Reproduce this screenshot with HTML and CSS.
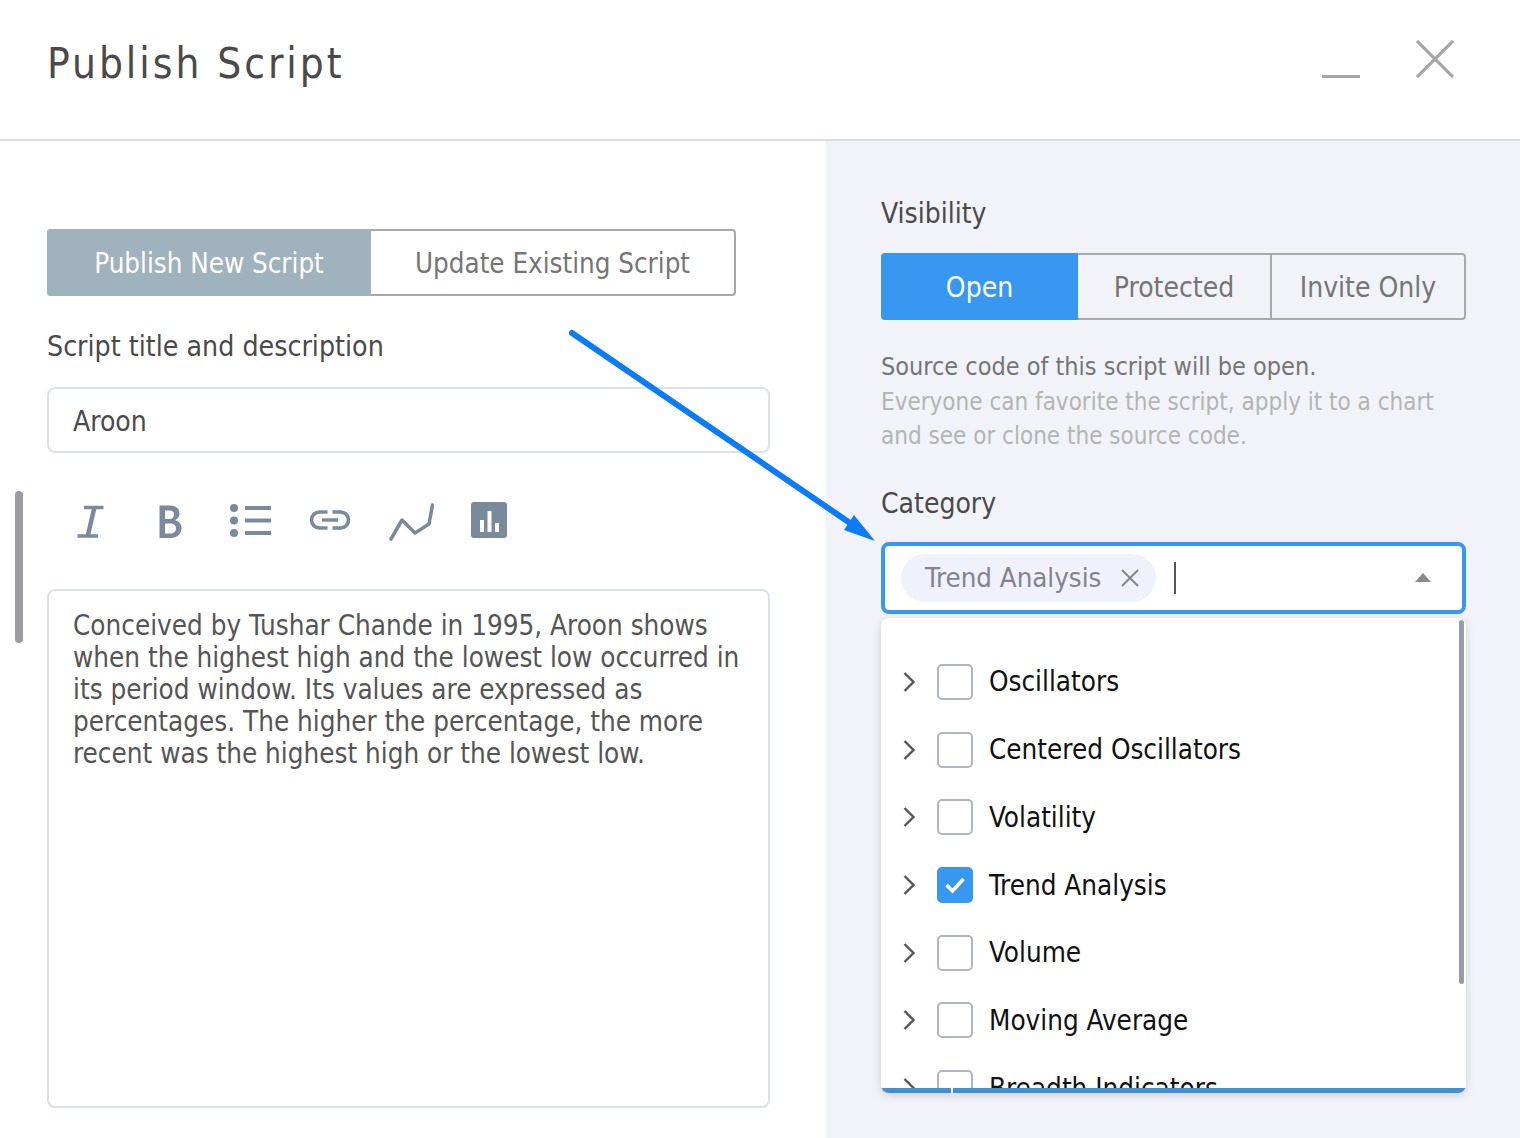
FILE: index.html
```html
<!DOCTYPE html>
<html lang="en">
<head>
    <meta charset="UTF-8">
    <title>Publish Script</title>
    <link rel="stylesheet" href="styles.css">
</head>
<body>
    <header class="dialog-head">
        <h1>Publish Script</h1>
        <div class="head-btns">
            <svg class="min-icon" width="38" height="4" viewBox="0 0 38 4"><rect width="38" height="3" y="0" fill="#a6a6a6"/></svg>
            <svg class="close-icon" width="38" height="38" viewBox="0 0 38 38"><path d="M1 1L37 37M37 1L1 37" stroke="#a6a6a6" stroke-width="3.2" fill="none"/></svg>
        </div>
    </header>

    <div class="dialog-body">
        <section class="left-pane">
            <div class="side-scroll"></div>
            <div class="tabs">
                <div class="tab tab-active">Publish New Script</div>
                <div class="tab tab-plain">Update Existing Script</div>
            </div>
            <div class="field-label">Script title and description</div>
            <div class="title-input">Aroon</div>

            <div class="toolbar">
                <div class="tool"><svg width="36" height="36" viewBox="0 0 36 36"><path d="M12 5.500H31.500M5.500 34H26" stroke="#7a8a9c" stroke-width="3.500" fill="none"/><path d="M22.500 5L15.500 35" stroke="#7a8a9c" stroke-width="4.500" fill="none"/></svg></div>
                <div class="tool"><svg width="36" height="36" viewBox="0 0 36 36"><path d="M7.500 3.500H18C24.500 3.500 27.500 7 27.500 11.500C27.500 14.500 26 17 23 18.200C27 19.200 29.500 22 29.500 26C29.500 32 25 36 18.500 36H7.500ZM13 8.500V17H17.500C20.500 17 22 15 22 12.500C22 10 20.500 8.500 17.500 8.500ZM13 21.500V31.500H18C21.500 31.500 24 30 24 26.500C24 23 21.500 21.500 18 21.500Z" fill="#7a8a9c" fill-rule="evenodd"/></svg></div>
                <div class="tool"><svg width="44" height="36" viewBox="0 0 44 36"><circle cx="6" cy="6" r="4" fill="#7a8a9c"/><circle cx="6" cy="18.500" r="4" fill="#7a8a9c"/><circle cx="6" cy="31" r="4" fill="#7a8a9c"/><path d="M17 6H43M17 18.500H43M17 31H43" stroke="#7a8a9c" stroke-width="4"/></svg></div>
                <div class="tool"><svg width="42" height="36" viewBox="0 0 42 36"><path d="M18.500 10H10.500C6 10 2.500 13.500 2.500 18C2.500 22.500 6 26 10.500 26H18.500M23.500 10H31.500C36 10 39.500 13.500 39.500 18C39.500 22.500 36 26 31.500 26H23.500M13 18H29" stroke="#7a8a9c" stroke-width="3.600" fill="none"/></svg></div>
                <div class="tool"><svg width="48" height="44" viewBox="0 0 48 44"><path d="M5 41L16 22L29 35L43 26L46.500 7" stroke="#7a8a9c" stroke-width="3.500" fill="none" stroke-linecap="round" stroke-linejoin="round"/></svg></div>
                <div class="tool tool-last"><svg width="36" height="36" viewBox="0 0 36 36"><rect width="36" height="36" rx="3" fill="#7a8a9c"/><path d="M11 18V30M18.500 9V30M26 21V30" stroke="#fff" stroke-width="4"/></svg></div>
            </div>

            <div class="desc-box">Conceived by Tushar Chande in 1995, Aroon shows when the highest high and the lowest low occurred in its period window. Its values are expressed as percentages. The higher the percentage, the more recent was the highest high or the lowest low.</div>
        </section>

        <section class="right-pane">
            <div class="field-label vis-label">Visibility</div>
            <div class="vis-tabs">
                <div class="vis-tab vis-active">Open</div>
                <div class="vis-tab vis-mid">Protected</div>
                <div class="vis-tab vis-last">Invite Only</div>
            </div>
            <p class="vis-note">
                <span class="note-dark">Source code of this script will be open.</span><br>
                Everyone can favorite the script, apply it to a chart and see or clone the source code.
            </p>
            <div class="field-label cat-label">Category</div>
            <div class="cat-select">
                <span class="chip">Trend Analysis
                    <svg width="20" height="20" viewBox="0 0 20 20"><path d="M2 2L18 18M18 2L2 18" stroke="#83838f" stroke-width="1.800"/></svg>
                </span>
                <span class="caret"></span>
                <svg class="select-arrow" width="16" height="9" viewBox="0 0 16 9"><path d="M8 0L16 9H0Z" fill="#8a8a8a"/></svg>
            </div>
            <div class="cat-list">
                <div class="cat-scroll"></div>
                <div class="cat-row"><svg class="chev" width="14" height="22" viewBox="0 0 14 22"><path d="M2.500 2L11.500 11L2.500 20" stroke="#555" stroke-width="2.400" fill="none"/></svg><span class="check"></span>Oscillators</div>
                <div class="cat-row"><svg class="chev" width="14" height="22" viewBox="0 0 14 22"><path d="M2.500 2L11.500 11L2.500 20" stroke="#555" stroke-width="2.400" fill="none"/></svg><span class="check"></span>Centered Oscillators</div>
                <div class="cat-row"><svg class="chev" width="14" height="22" viewBox="0 0 14 22"><path d="M2.500 2L11.500 11L2.500 20" stroke="#555" stroke-width="2.400" fill="none"/></svg><span class="check"></span>Volatility</div>
                <div class="cat-row"><svg class="chev" width="14" height="22" viewBox="0 0 14 22"><path d="M2.500 2L11.500 11L2.500 20" stroke="#555" stroke-width="2.400" fill="none"/></svg><span class="check checked"><svg width="22" height="18" viewBox="0 0 22 18"><path d="M2.500 9L8.500 15L19.500 3" stroke="#fff" stroke-width="3.600" fill="none"/></svg></span>Trend Analysis</div>
                <div class="cat-row"><svg class="chev" width="14" height="22" viewBox="0 0 14 22"><path d="M2.500 2L11.500 11L2.500 20" stroke="#555" stroke-width="2.400" fill="none"/></svg><span class="check"></span>Volume</div>
                <div class="cat-row"><svg class="chev" width="14" height="22" viewBox="0 0 14 22"><path d="M2.500 2L11.500 11L2.500 20" stroke="#555" stroke-width="2.400" fill="none"/></svg><span class="check"></span>Moving Average</div>
                <div class="cat-row"><svg class="chev" width="14" height="22" viewBox="0 0 14 22"><path d="M2.500 2L11.500 11L2.500 20" stroke="#555" stroke-width="2.400" fill="none"/></svg><span class="check"></span>Breadth Indicators</div>
                <div class="cat-bottom"></div>
            </div>
        </section>
    </div>

    <svg class="arrow-overlay" width="1520" height="1138" viewBox="0 0 1520 1138">
        <path d="M572 333L850 523" stroke="#0a7cf5" stroke-width="6" stroke-linecap="round" fill="none"/>
        <path d="M875 541L844 530L854 515Z" fill="#0a7cf5"/>
    </svg>
</body>
</html>
```

FILE: styles.css
```css
/* Page */
html, body {
    margin: 0;
    height: 1138px;
    overflow: hidden;
}
body {
    position: relative;
    font-family: "DejaVu Sans Condensed", "DejaVu Sans", sans-serif;
    font-stretch: condensed;
    background: #fff;
    color: #4a4a4a;
}

/* Header */
.dialog-head {
    box-sizing: border-box;
    padding: 0 66px 0 48px;
    display: flex;
    align-items: center;
    justify-content: space-between;
    border-bottom: 2px solid #dcdde0;
    height: 141px;
}
h1 {
    margin: 0 0 13px -1px;
    font-size: 42px;
    font-weight: 400;
    letter-spacing: 2.950px;
    color: #4a4a4a;
}
.head-btns {
    display: flex;
    align-items: flex-start;
    gap: 56px;
    margin-bottom: 21px;
}
.min-icon {
    margin-top: 35px;
}

/* Body */
.dialog-body {
    display: grid;
    grid-template-columns: 826px 1fr;
    height: 997px;
}
.left-pane {
    position: relative;
    padding: 88px 56px 0 47px;
}
.side-scroll {
    position: absolute;
    left: 15px;
    top: 350px;
    width: 8px;
    height: 152px;
    border-radius: 4px;
    background: #9a9ba3;
}
.right-pane {
    background: #f1f3f8;
    padding: 0 54px 0 55px;
}
.field-label {
    font-size: 28px;
    line-height: 36px;
    color: #4a4a4a;
}

/* Publish tabs */
.tabs {
    display: flex;
    width: 689px;
    height: 67px;
    box-sizing: border-box;
    border: 2px solid #a9a9a9;
    border-radius: 4px;
    font-size: 27.500px;
}
.tab {
    display: flex;
    align-items: center;
    justify-content: center;
}
.tab-active {
    width: 324px;
    margin: -2px 0 -2px -2px;
    background: #9fb2be;
    color: #fff;
    border-radius: 4px 0 0 4px;
}
.tab-plain {
    flex: 1;
    color: #757575;
}
.tabs + .field-label {
    margin-top: 33px;
    font-size: 28.250px;
}

/* Title input */
.title-input {
    margin-top: 22px;
    height: 66px;
    box-sizing: border-box;
    padding: 2px 0 0 24px;
    border: 2px solid #dde1e5;
    border-radius: 8px;
    font-size: 28px;
    line-height: 62px;
}

/* Editor toolbar */
.toolbar {
    display: flex;
    align-items: center;
    height: 134px;
    padding: 0 0 2px 3px;
}
.tool {
    display: flex;
    align-items: center;
    justify-content: center;
    width: 80px;
}
.tool-last {
    margin-left: -1px;
}
.desc-box {
    height: 519px;
    box-sizing: border-box;
    padding: 19px 20px 0 24px;
    border: 2px solid #dde1e5;
    border-radius: 8px;
    font-size: 27.600px;
    line-height: 32px;
    color: #555;
}

/* Visibility */
.vis-label {
    margin-top: 55px;
}
.vis-tabs {
    display: flex;
    height: 67px;
    margin-top: 21px;
    font-size: 28px;
}
.vis-tab {
    display: flex;
    align-items: center;
    justify-content: center;
    box-sizing: border-box;
    padding-top: 2px;
    border: 2px solid #a9a9a9;
    color: #757575;
}
.vis-active {
    width: 197px;
    background: #3897f0;
    border-color: #3897f0;
    color: #fff;
    border-radius: 4px 0 0 4px;
}
.vis-mid {
    width: 192px;
    border-left: 0;
    border-right: 0;
}
.vis-last {
    flex: 1;
    border-radius: 0 4px 4px 0;
}
.vis-note {
    margin: 30px 0 0;
    font-size: 24px;
    line-height: 34.500px;
    color: #b4b4b4;
}
.note-dark {
    font-size: 25px;
    color: #757575;
}

/* Category select */
.cat-label {
    margin-top: 32px;
}
.cat-select {
    position: relative;
    height: 72px;
    margin-top: 20px;
    box-sizing: border-box;
    border: 4px solid #3897f0;
    border-radius: 8px;
    background: #fff;
    display: flex;
    align-items: center;
    padding-left: 16px;
}
.chip {
    display: flex;
    align-items: center;
    gap: 19px;
    height: 48px;
    padding: 0 16px 0 24px;
    border-radius: 24px;
    background: #eff2fa;
    color: #83838f;
    font-size: 27.400px;
}
.caret {
    width: 2px;
    height: 32px;
    margin-left: 18px;
    background: #555;
}
.select-arrow {
    position: absolute;
    right: 31px;
    top: 27px;
}
.cat-list {
    position: relative;
    margin-top: 4px;
    height: 475px;
    padding-top: 30.600px;
    box-sizing: border-box;
    background: #fff;
    border-radius: 8px;
    box-shadow: 0 2px 8px rgba(0, 0, 0, 0.15);
    overflow: hidden;
}
.cat-scroll {
    position: absolute;
    right: 2px;
    top: 2px;
    width: 5px;
    height: 364px;
    border-radius: 3px;
    background: #9a9ba3;
}
.cat-row {
    display: flex;
    align-items: center;
    height: 67.700px;
    padding-left: 21px;
    font-size: 27.600px;
    color: #111;
}
.chev {
    flex: none;
    margin-right: 21px;
}
.check {
    flex: none;
    display: flex;
    align-items: center;
    justify-content: center;
    width: 36px;
    height: 36px;
    box-sizing: border-box;
    margin-right: 16px;
    border: 2px solid #b2b5c0;
    border-radius: 5px;
}
.checked {
    background: #3897f0;
    border-color: #3897f0;
}
.cat-bottom {
    position: absolute;
    left: 0;
    right: 0;
    bottom: 0;
    height: 5px;
    background: #3f8fdb;
}
.cat-bottom::after {
    content: "";
    position: absolute;
    left: 70px;
    top: 0;
    width: 2px;
    height: 5px;
    background: #fff;
}

/* Annotation arrow */
.arrow-overlay {
    position: absolute;
    left: 0;
    top: 0;
    pointer-events: none;
}
```
